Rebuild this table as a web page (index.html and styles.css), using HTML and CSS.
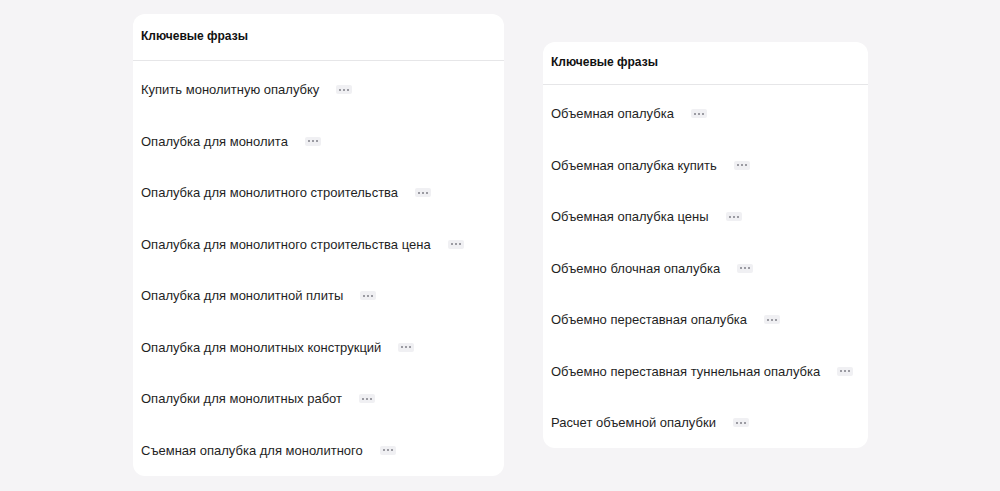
FILE: index.html
```html
<!DOCTYPE html>
<html lang="ru">
<head>
<meta charset="utf-8">
<link rel="stylesheet" href="styles.css">
</head>
<body>
<div class="page">
  <section class="card card-left">
    <div class="card-head">Ключевые фразы</div>
    <ul class="phrases">
      <li><span class="txt">Купить монолитную опалубку</span><span class="more"><i></i><i></i><i></i></span></li>
      <li><span class="txt">Опалубка для монолита</span><span class="more"><i></i><i></i><i></i></span></li>
      <li><span class="txt">Опалубка для монолитного строительства</span><span class="more"><i></i><i></i><i></i></span></li>
      <li><span class="txt">Опалубка для монолитного строительства цена</span><span class="more"><i></i><i></i><i></i></span></li>
      <li><span class="txt">Опалубка для монолитной плиты</span><span class="more"><i></i><i></i><i></i></span></li>
      <li><span class="txt">Опалубка для монолитных конструкций</span><span class="more"><i></i><i></i><i></i></span></li>
      <li><span class="txt">Опалубки для монолитных работ</span><span class="more"><i></i><i></i><i></i></span></li>
      <li><span class="txt">Съемная опалубка для монолитного</span><span class="more"><i></i><i></i><i></i></span></li>
    </ul>
  </section>
  <section class="card card-right">
    <div class="card-head">Ключевые фразы</div>
    <ul class="phrases">
      <li><span class="txt">Объемная опалубка</span><span class="more"><i></i><i></i><i></i></span></li>
      <li><span class="txt">Объемная опалубка купить</span><span class="more"><i></i><i></i><i></i></span></li>
      <li><span class="txt">Объемная опалубка цены</span><span class="more"><i></i><i></i><i></i></span></li>
      <li><span class="txt">Объемно блочная опалубка</span><span class="more"><i></i><i></i><i></i></span></li>
      <li><span class="txt">Объемно переставная опалубка</span><span class="more"><i></i><i></i><i></i></span></li>
      <li><span class="txt">Объемно переставная туннельная опалубка</span><span class="more"><i></i><i></i><i></i></span></li>
      <li><span class="txt">Расчет объемной опалубки</span><span class="more"><i></i><i></i><i></i></span></li>
    </ul>
  </section>
</div>
</body>
</html>
```
FILE: styles.css
```css
html, body {
  margin: 0;
  padding: 0;
  background: #f5f4f6;
  font-family: "Liberation Sans", Arial, sans-serif;
  color: #1f1f1f;
}
.page {
  display: flex;
  align-items: flex-start;
  padding-left: 133px;
  gap: 39px;
  height: 491px;
  box-sizing: border-box;
}
.card {
  background: #fff;
  border-radius: 12px;
  box-sizing: border-box;
}
.card-left {
  width: 371px;
  margin-top: 14px;
  height: 462px;
}
.card-right {
  width: 325px;
  margin-top: 42px;
  height: 406px;
}
.card-head {
  font-size: 12px;
  font-weight: bold;
  color: #111;
  padding: 0 8px;
  border-bottom: 1px solid #e6e6e8;
  display: flex;
  align-items: center;
}
.card-left .card-head { height: 44px; padding-bottom: 2px; }
.card-right .card-head { height: 40px; padding-bottom: 2px; }
.phrases {
  list-style: none;
  margin: 0;
  padding: 3px 0 0 0;
}
.phrases li {
  height: 51.5px;
  display: flex;
  align-items: center;
  padding: 0 8px;
  font-size: 13px;
}
.more {
  margin-left: 17px;
  width: 16px;
  height: 9px;
  background: #f0f0f3;
  border-radius: 2px;
  display: inline-flex;
  align-items: center;
  justify-content: center;
  gap: 2px;
}
.more i {
  width: 2px;
  height: 2px;
  background: #9b9ba2;
  display: block;
}
```
